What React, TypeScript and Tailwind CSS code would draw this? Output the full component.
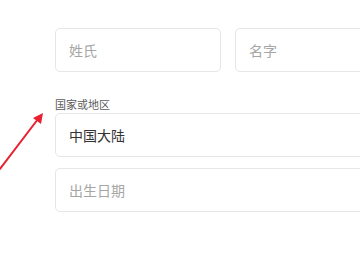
const Field = ({ text, filled, className }: { text: string, filled?: boolean, className?: string }) => (
  <div className={`h-[44px] flex items-center pl-[13px] border border-[#e6e6e6] rounded-[5px] bg-white ${className || ''}`}>
    <span className={`text-[14px] leading-none ${filled ? 'text-[#333333]' : 'text-[#a6a6a6]'}`}>{text}</span>
  </div>
);

const App = () => {
  return (
    <div
      className="relative w-[360px] h-[270px] overflow-hidden bg-white"
      style={{ fontFamily: '"Noto Sans CJK SC", "Noto Sans", sans-serif' }}
    >
      <div className="w-[346px] ml-[55px] pt-[28px] flex flex-col">
        <div className="flex gap-[14px]">
          <Field text="姓氏" className="w-[166px] shrink-0" />
          <Field text="名字" className="w-[166px] shrink-0" />
        </div>
        <div className="mt-[25px] mb-[2px] text-[11px] leading-[14px] text-[#5c5c5c]">国家或地区</div>
        <Field text="中国大陆" filled />
        <Field text="出生日期" className="mt-[11px]" />
      </div>

      {/* red arrow pointing at the label */}
      <svg className="absolute left-0 top-0" width="60" height="180" viewBox="0 0 60 180">
        <line x1="0" y1="169" x2="38" y2="119" stroke="#e8202f" strokeWidth="2" strokeLinecap="round" />
        <polygon points="43,113 41,124 33,118" fill="#e8202f" />
      </svg>
    </div>
  );
};

export default App;
